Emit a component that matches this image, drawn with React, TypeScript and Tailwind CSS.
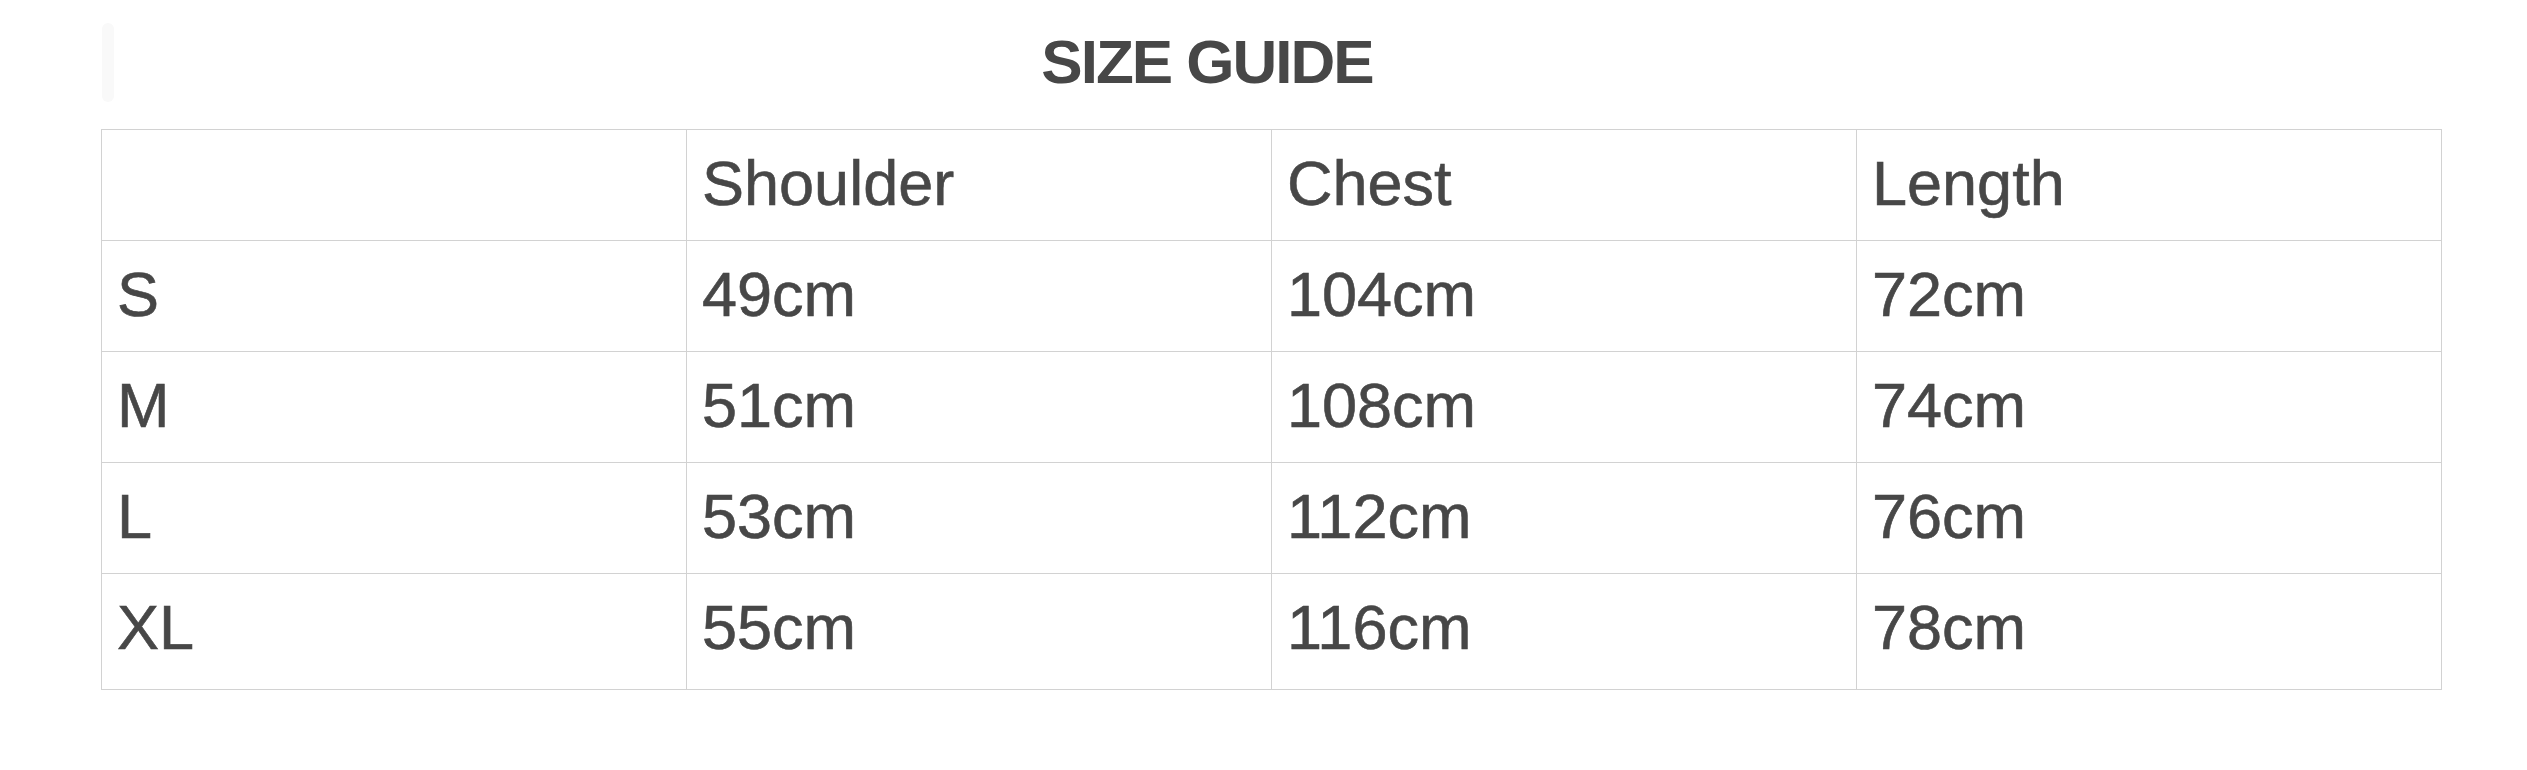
const sizes = [
  { size: "S", shoulder: "49cm", chest: "104cm", length: "72cm" },
  { size: "M", shoulder: "51cm", chest: "108cm", length: "74cm" },
  { size: "L", shoulder: "53cm", chest: "112cm", length: "76cm" },
  { size: "XL", shoulder: "55cm", chest: "116cm", length: "78cm" },
];

const cell =
  "border border-[#d2d2d2] pl-[15px] pr-[14px] pt-[22px] align-top text-left font-normal [-webkit-text-stroke:0.6px_#474747]";

export default function App() {
  return (
    <div className="w-[2527px] h-[770px] bg-white text-[#474747] font-['Liberation_Sans',Arial,sans-serif]">
      {/* heading */}
      <div className="flex h-[129px] items-start pl-[102px]">
        <div className="mt-[23px] h-[79px] w-[12px] rounded-full bg-[#f9f9f9]" />
        <h1 className="flex-1 pt-[31px] pr-[227px] text-center text-[62px] leading-[62px] font-bold tracking-[-2px]">
          SIZE GUIDE
        </h1>
      </div>

      <table className="ml-[101px] w-[2341px] table-fixed border-collapse text-[63px] leading-[63px]">
        <thead>
          <tr className="h-[111px]">
            <th className={cell}></th>
            <th className={cell}>Shoulder</th>
            <th className={cell}>Chest</th>
            <th className={cell}>Length</th>
          </tr>
        </thead>
        <tbody>
          {sizes.map((s, i) => (
            <tr key={s.size} className={i === sizes.length - 1 ? "h-[116px]" : "h-[111px]"}>
              <td className={cell}>{s.size}</td>
              <td className={cell}>{s.shoulder}</td>
              <td className={cell}>{s.chest}</td>
              <td className={cell}>{s.length}</td>
            </tr>
          ))}
        </tbody>
      </table>
    </div>
  );
}
